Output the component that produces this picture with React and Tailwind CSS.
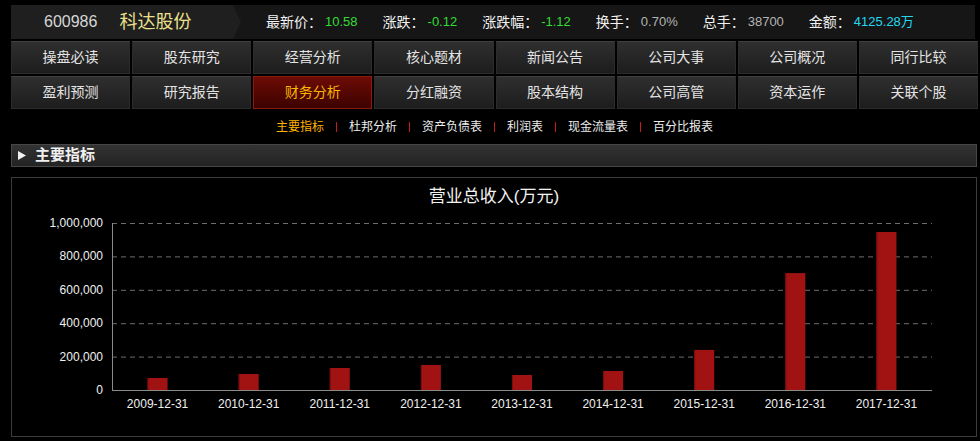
import React from "react";

const stats = [
  { label: "最新价：", value: "10.58", color: "text-[#33dd33]" },
  { label: "涨跌：", value: "-0.12", color: "text-[#33dd33]" },
  { label: "涨跌幅：", value: "-1.12", color: "text-[#33dd33]" },
  { label: "换手：", value: "0.70%", color: "text-[#b4b4b4]" },
  { label: "总手：", value: "38700", color: "text-[#b4b4b4]" },
  { label: "金额：", value: "4125.28万", color: "text-[#22d8f2]" },
];

const navRows = [
  ["操盘必读", "股东研究", "经营分析", "核心题材", "新闻公告", "公司大事", "公司概况", "同行比较"],
  ["盈利预测", "研究报告", "财务分析", "分红融资", "股本结构", "公司高管", "资本运作", "关联个股"],
];

const subTabs = ["主要指标", "杜邦分析", "资产负债表", "利润表", "现金流量表", "百分比报表"];

// revenue in 万元, read off the bars
const data = [
  { date: "2009-12-31", v: 72000 },
  { date: "2010-12-31", v: 96000 },
  { date: "2011-12-31", v: 132000 },
  { date: "2012-12-31", v: 150000 },
  { date: "2013-12-31", v: 90000 },
  { date: "2014-12-31", v: 114000 },
  { date: "2015-12-31", v: 240000 },
  { date: "2016-12-31", v: 700000 },
  { date: "2017-12-31", v: 946000 },
];

const ticks = [
  { v: 1000000, t: "1,000,000" },
  { v: 800000, t: "800,000" },
  { v: 600000, t: "600,000" },
  { v: 400000, t: "400,000" },
  { v: 200000, t: "200,000" },
  { v: 0, t: "0" },
];

function Chart() {
  const x0 = 100;
  const x1 = 920;
  const yTop = 7;
  const yBase = 174;
  const h = yBase - yTop;
  const step = (x1 - x0) / data.length;
  const yOf = (v) => yBase - (v / 1000000) * h;

  return (
    <svg width="964" height="220" className="block">
      {ticks.map((t) =>
        t.v === 0 ? null : (
          <line
            key={t.v}
            x1={x0}
            x2={x1}
            y1={yOf(t.v) + 0.5}
            y2={yOf(t.v) + 0.5}
            stroke="#6e6e6e"
            strokeDasharray="5 4"
          />
        )
      )}
      <line x1={x0 + 0.5} x2={x0 + 0.5} y1={yTop} y2={yBase} stroke="#8a8a8a" />
      <line x1={x0} x2={x1} y1={yBase + 0.5} y2={yBase + 0.5} stroke="#8a8a8a" />
      {ticks.map((t) => (
        <text
          key={t.t}
          x={91}
          y={yOf(t.v) + 4}
          textAnchor="end"
          fill="#f0f0f0"
          fontSize="12"
          fontFamily="'Liberation Sans', sans-serif"
        >
          {t.t}
        </text>
      ))}
      {data.map((d, i) => {
        const cx = x0 + step * (i + 0.5);
        const top = yOf(d.v);
        return (
          <g key={d.date}>
            <rect x={cx - 10} y={top} width="20" height={yBase - top} fill="#a11313" />
            <rect x={cx - 10} y={top} width="1" height={yBase - top} fill="#7c0c0c" />
            <text
              x={cx}
              y={192}
              textAnchor="middle"
              fill="#f0f0f0"
              fontSize="12"
              fontFamily="'Liberation Sans', sans-serif"
            >
              {d.date}
            </text>
          </g>
        );
      })}
    </svg>
  );
}

export default function App() {
  return (
    <div className="w-[980px] h-[441px] bg-black overflow-hidden font-['Liberation_Sans','Noto_Sans_CJK_SC',sans-serif]">
      <div className="pl-[11px] flex flex-col">
        {/* top quote bar */}
        <div className="mt-[5px] h-[34px] w-[964px] bg-[#161616] flex items-center">
          <div className="h-full w-[230px] bg-[#1f1f1f] flex items-center pl-[33px] [clip-path:polygon(0_0,calc(100%-8px)_0,100%_50%,calc(100%-8px)_100%,0_100%)]">
            <span className="text-[16px] text-[#d6d6d6]">600986</span>
            <span className="ml-[22px] text-[18px] text-[#ece08c]">科达股份</span>
          </div>
          <div className="ml-[25px] flex items-center gap-[25px]">
            {stats.map((s) => (
              <div key={s.label} className="flex items-center">
                <span className="text-[14px] text-[#f2f2f2]">{s.label}</span>
                <span className={`ml-[3px] text-[13px] ${s.color}`}>{s.value}</span>
              </div>
            ))}
          </div>
        </div>

        {/* nav grid */}
        <div className="mt-[2px] w-[967px] flex flex-col gap-[2px]">
          {navRows.map((row, ri) => (
            <div key={ri} className="grid grid-cols-8 gap-[2px]">
              {row.map((n) => {
                const active = n === "财务分析";
                return (
                  <div
                    key={n}
                    className={`h-[33px] flex items-center justify-center text-[14px] border ${
                      active
                        ? "bg-gradient-to-b from-[#6e0c06] to-[#3c0300] border-[#8e1a0e] text-[#f7b600]"
                        : "bg-gradient-to-b from-[#2f2f2f] to-[#1d1d1d] border-[#2c2c2c] border-t-[#404040] text-[#e4e4e4]"
                    }`}
                  >
                    {n}
                  </div>
                );
              })}
            </div>
          ))}
        </div>

        {/* sub tabs */}
        <div className="h-[35px] flex items-center pl-[265px] text-[12px]">
          {subTabs.map((t, i) => (
            <div key={t} className="flex items-center">
              {i > 0 && <span className="mx-[12px] w-px h-[10px] bg-[#c41c1c]" />}
              <span className={i === 0 ? "text-[#ffb000]" : "text-[#ececec]"}>{t}</span>
            </div>
          ))}
        </div>

        {/* section header */}
        <div className="h-[23px] w-[966px] border border-[#474747] bg-gradient-to-b from-[#333333] to-[#232323] flex items-center pl-[6px]">
          <svg width="8" height="9" viewBox="0 0 8 9">
            <path d="M0 0 L8 4.5 L0 9 Z" fill="#f0f0f0" />
          </svg>
          <span className="ml-[9px] text-[15px] font-bold text-[#f0f0f0]">主要指标</span>
        </div>

        {/* chart box */}
        <div className="mt-[10px] h-[260px] w-[966px] border border-[#3c3c3c] flex flex-col">
          <div className="h-[38px] flex items-center justify-center text-[17px] text-[#f2f2f2]">
            营业总收入(万元)
          </div>
          <Chart />
        </div>
      </div>
    </div>
  );
}
